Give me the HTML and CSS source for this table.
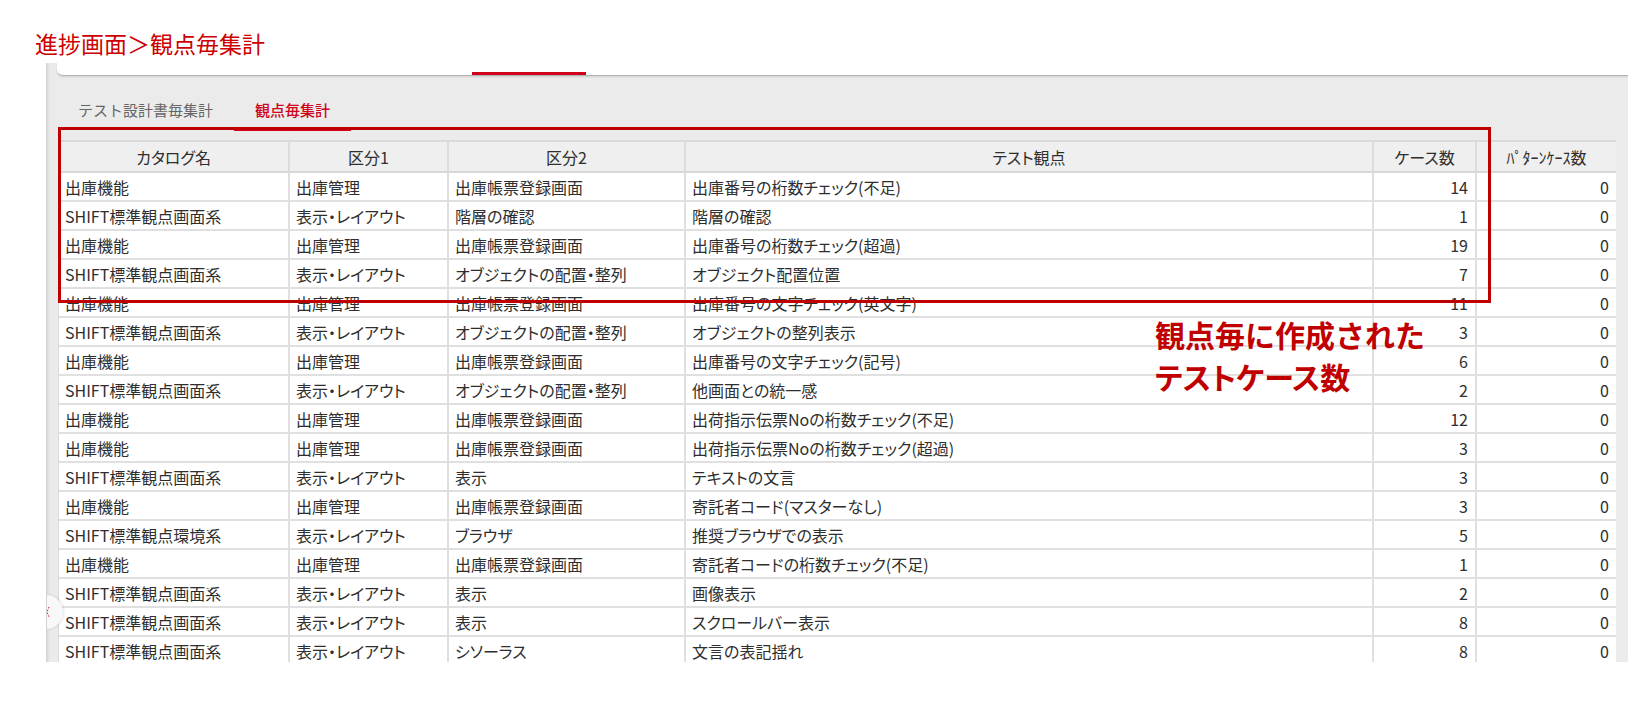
FILE: index.html
```html
<!DOCTYPE html>
<html lang="ja">
<head>
<meta charset="utf-8">
<title>進捗画面 観点毎集計</title>
<link rel="stylesheet" href="styles.css">
</head>
<body>
<div class="page">
  <h1 class="page-title">進捗画面＞観点毎集計</h1>
  <section class="panel">
    <div class="panel-top"><span class="panel-top-indicator"></span></div>
    <nav class="tabs">
      <a class="tab">テスト設計書毎集計</a>
      <a class="tab tab-active">観点毎集計</a>
    </nav>
    <div class="grid-wrap">
      <table class="grid">
        <colgroup>
          <col class="c-catalog"><col class="c-k1"><col class="c-k2"><col class="c-view"><col class="c-cases"><col class="c-pattern">
        </colgroup>
        <thead>
          <tr><th>カタログ名</th><th>区分1</th><th>区分2</th><th>テスト観点</th><th>ケース数</th><th>ﾊﾟﾀｰﾝｹｰｽ数</th></tr>
        </thead>
        <tbody>
          <tr><td>出庫機能</td><td>出庫管理</td><td>出庫帳票登録画面</td><td>出庫番号の桁数チェック(不足)</td><td class="num">14</td><td class="num">0</td></tr>
          <tr><td>SHIFT標準観点画面系</td><td>表示・レイアウト</td><td>階層の確認</td><td>階層の確認</td><td class="num">1</td><td class="num">0</td></tr>
          <tr><td>出庫機能</td><td>出庫管理</td><td>出庫帳票登録画面</td><td>出庫番号の桁数チェック(超過)</td><td class="num">19</td><td class="num">0</td></tr>
          <tr><td>SHIFT標準観点画面系</td><td>表示・レイアウト</td><td>オブジェクトの配置・整列</td><td>オブジェクト配置位置</td><td class="num">7</td><td class="num">0</td></tr>
          <tr><td>出庫機能</td><td>出庫管理</td><td>出庫帳票登録画面</td><td>出庫番号の文字チェック(英文字)</td><td class="num">11</td><td class="num">0</td></tr>
          <tr><td>SHIFT標準観点画面系</td><td>表示・レイアウト</td><td>オブジェクトの配置・整列</td><td>オブジェクトの整列表示</td><td class="num">3</td><td class="num">0</td></tr>
          <tr><td>出庫機能</td><td>出庫管理</td><td>出庫帳票登録画面</td><td>出庫番号の文字チェック(記号)</td><td class="num">6</td><td class="num">0</td></tr>
          <tr><td>SHIFT標準観点画面系</td><td>表示・レイアウト</td><td>オブジェクトの配置・整列</td><td>他画面との統一感</td><td class="num">2</td><td class="num">0</td></tr>
          <tr><td>出庫機能</td><td>出庫管理</td><td>出庫帳票登録画面</td><td>出荷指示伝票Noの桁数チェック(不足)</td><td class="num">12</td><td class="num">0</td></tr>
          <tr><td>出庫機能</td><td>出庫管理</td><td>出庫帳票登録画面</td><td>出荷指示伝票Noの桁数チェック(超過)</td><td class="num">3</td><td class="num">0</td></tr>
          <tr><td>SHIFT標準観点画面系</td><td>表示・レイアウト</td><td>表示</td><td>テキストの文言</td><td class="num">3</td><td class="num">0</td></tr>
          <tr><td>出庫機能</td><td>出庫管理</td><td>出庫帳票登録画面</td><td>寄託者コード(マスターなし)</td><td class="num">3</td><td class="num">0</td></tr>
          <tr><td>SHIFT標準観点環境系</td><td>表示・レイアウト</td><td>ブラウザ</td><td>推奨ブラウザでの表示</td><td class="num">5</td><td class="num">0</td></tr>
          <tr><td>出庫機能</td><td>出庫管理</td><td>出庫帳票登録画面</td><td>寄託者コードの桁数チェック(不足)</td><td class="num">1</td><td class="num">0</td></tr>
          <tr><td>SHIFT標準観点画面系</td><td>表示・レイアウト</td><td>表示</td><td>画像表示</td><td class="num">2</td><td class="num">0</td></tr>
          <tr><td>SHIFT標準観点画面系</td><td>表示・レイアウト</td><td>表示</td><td>スクロールバー表示</td><td class="num">8</td><td class="num">0</td></tr>
          <tr><td>SHIFT標準観点画面系</td><td>表示・レイアウト</td><td>シソーラス</td><td>文言の表記揺れ</td><td class="num">8</td><td class="num">0</td></tr>
        </tbody>
      </table>
    </div>
    <div class="handle">
      <svg class="handle-icon" width="4" height="12" viewBox="0 0 4 12"><path d="M3 1 L1 6 L3 11" fill="none" stroke="#e0101e" stroke-width="1" stroke-dasharray="1.5 1.5"/></svg>
    </div>
  </section>

  <div class="callout-box"></div>
  <p class="callout-text">観点毎に作成された<br><span class="callout-line2">テストケース数</span></p>
</div>
</body>
</html>
```

FILE: styles.css
```css
* { box-sizing: border-box; }

html, body {
  margin: 0;
  padding: 0;
  background: #ffffff;
}

body {
  font-family: "Noto Sans CJK JP", "Noto Sans", sans-serif;
  color: #333333;
}

.page {
  position: relative;
  width: 1628px;
  height: 725px;
  overflow: hidden;
}

.page-title {
  margin: 0;
  height: 63px;
  padding: 28px 0 0 35px;
  font-size: 23px;
  line-height: 30px;
  font-weight: 400;
  color: #cc0000;
}

.panel {
  position: relative;
  margin-left: 46px;
  height: 599px;
  background: #ebebeb;
  border-left: 1px solid #d4d4d4;
  box-shadow: inset 3px 0 3px -2px rgba(0, 0, 0, 0.10);
  display: flex;
  flex-direction: column;
  overflow: hidden;
}

.panel-top {
  flex: none;
  margin-left: 10px;
  height: 13px;
  background: #ffffff;
  border-bottom: 1px solid #b4b4b4;
  border-bottom-left-radius: 6px;
  box-shadow: 0 1px 2px rgba(0, 0, 0, 0.12);
  display: flex;
  align-items: flex-end;
  padding-left: 415px;
}

.panel-top-indicator {
  width: 114px;
  height: 3px;
  background: #d0021b;
}

.tabs {
  flex: none;
  display: flex;
  padding-left: 10px;
}

.tab {
  padding: 24px 21px 8px;
  font-size: 15px;
  line-height: 20px;
  color: #666666;
  border-bottom: 3px solid transparent;
  white-space: nowrap;
}

.tab-active {
  color: #d0021b;
  font-weight: 500;
  border-bottom-color: #d0021b;
}

.grid-wrap {
  flex: 1;
  margin: 9px 0 0 11px;
  width: 1558px;
  overflow: hidden;
}

.grid {
  width: 1558px;
  table-layout: fixed;
  border-collapse: separate;
  border-spacing: 0;
  font-size: 16px;
  font-feature-settings: "palt";
  color: #2e2e2e;
}

.c-catalog { width: 232px; }
.c-k1 { width: 159px; }
.c-k2 { width: 237px; }
.c-view { width: 688px; }
.c-cases { width: 103px; }
.c-pattern { width: 139px; }

.grid th {
  height: 33px;
  padding: 0 6px;
  background: #efefef;
  font-weight: 400;
  text-align: center;
  white-space: nowrap;
  border-top: 2px solid #dadada;
  border-bottom: 2px solid #d8d8d8;
  border-right: 2px solid #dcdcdc;
}

.grid td {
  height: 29px;
  padding: 0 6px;
  line-height: 20px;
  background: #ffffff;
  white-space: nowrap;
  overflow: hidden;
  border-bottom: 2px solid #e0e0e0;
  border-right: 2px solid #e0e0e0;
}

.grid th:first-child,
.grid td:first-child {
  border-left: 1px solid #dadada;
}

.grid th:last-child,
.grid td:last-child {
  border-right: none;
}

.grid .num {
  text-align: right;
  padding-right: 7px;
}

.handle {
  position: absolute;
  left: -18px;
  top: 532px;
  width: 34px;
  height: 34px;
  border-radius: 50%;
  background: #f8f8f8;
  box-shadow: 1px 0 3px rgba(0, 0, 0, 0.12);
  display: flex;
  align-items: center;
  padding-left: 17px;
}

.callout-box {
  position: absolute;
  left: 58px;
  top: 127px;
  width: 1433px;
  height: 176px;
  border: 3px solid #c00000;
}

.callout-text {
  position: absolute;
  left: 1155px;
  top: 313px;
  margin: 0;
  font-size: 30px;
  line-height: 42px;
  font-weight: 700;
  color: #c00000;
  white-space: nowrap;
}

.callout-line2 {
  font-feature-settings: "palt";
}
```
